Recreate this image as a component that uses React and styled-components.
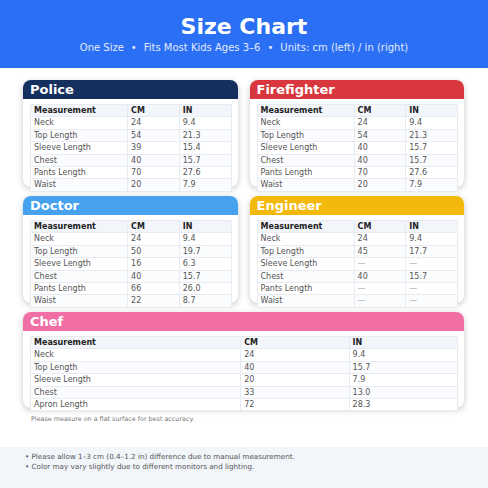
import React from 'react';
import styled, { createGlobalStyle } from 'styled-components';

const Global = createGlobalStyle`
  body {
    margin: 0;
    background: #ffffff;
    font-family: "DejaVu Sans", Verdana, sans-serif;
  }
`;

const Page = styled.div`
  width: 488px;
  height: 488px;
  overflow: hidden;
  display: flex;
  flex-direction: column;
`;

const Header = styled.header`
  height: 68px;
  background: #2b6ff4;
  color: #fff;
  text-align: center;
  padding-top: 14px;
  box-sizing: border-box;
`;

const Title = styled.h1`
  margin: 0;
  font-size: 22px;
  line-height: 26px;
  font-weight: bold;
`;

const Subtitle = styled.div`
  margin-top: 2px;
  font-size: 10px;
  line-height: 12px;
  color: #e2ebff;
`;

const Dot = styled.span`
  margin: 0 7px;
`;

const Main = styled.main`
  display: grid;
  grid-template-columns: 1fr 1fr;
  gap: 9px 12px;
  padding: 12px 24px 39px 23px;
`;

const Card = styled.section`
  position: relative;
  height: ${p => (p.$wide ? 96 : 107)}px;
  grid-column: ${p => (p.$wide ? '1 / span 2' : 'auto')};
  background: #fff;
  border-radius: 8px;
  box-shadow: 0 2px 6px rgba(0, 0, 0, 0.22);
`;

const CardHead = styled.div`
  height: 19px;
  background: ${p => p.$color};
  border-radius: 8px 8px 0 0;
  color: #fff;
  font-size: 13px;
  font-weight: bold;
  line-height: 19px;
  padding-left: 7px;
`;

const Table = styled.table`
  width: calc(100% - 13px);
  margin: 5px 6px 0 7px;
  border-collapse: collapse;
  table-layout: fixed;
  font-size: 8px;
  border: 1px solid #e8ecf2;
`;

const Th = styled.th`
  text-align: left;
  font-weight: bold;
  color: #222;
  background: #f2f5f9;
  padding: 0 3px;
  line-height: 11.4px;
  border: 1px solid #e8ecf2;
  width: ${p => p.$w};
`;

const Td = styled.td`
  color: ${p => (p.$muted ? '#aaa' : '#555')};
  padding: 0 3px;
  line-height: 11.4px;
  border: 1px solid #e8ecf2;
  background: ${p => (p.$alt ? '#fbfcfe' : '#fff')};
`;

const Note = styled.p`
  margin: 4px 0 0 8px;
  font-size: 6.4px;
  line-height: 8px;
  color: #777;
`;

const Footer = styled.footer`
  flex: 1;
  background: #f2f6fb;
  padding: 5px 0 0 25px;
  font-size: 7.2px;
  line-height: 10.4px;
  color: #555;
`;

const cards = [
  {
    name: 'Police',
    color: '#15305e',
    rows: [['Neck', '24', '9.4'], ['Top Length', '54', '21.3'], ['Sleeve Length', '39', '15.4'], ['Chest', '40', '15.7'], ['Pants Length', '70', '27.6'], ['Waist', '20', '7.9']],
  },
  {
    name: 'Firefighter',
    color: '#d8383d',
    rows: [['Neck', '24', '9.4'], ['Top Length', '54', '21.3'], ['Sleeve Length', '40', '15.7'], ['Chest', '40', '15.7'], ['Pants Length', '70', '27.6'], ['Waist', '20', '7.9']],
  },
  {
    name: 'Doctor',
    color: '#46a1ee',
    rows: [['Neck', '24', '9.4'], ['Top Length', '50', '19.7'], ['Sleeve Length', '16', '6.3'], ['Chest', '40', '15.7'], ['Pants Length', '66', '26.0'], ['Waist', '22', '8.7']],
  },
  {
    name: 'Engineer',
    color: '#f3b80c',
    rows: [['Neck', '24', '9.4'], ['Top Length', '45', '17.7'], ['Sleeve Length', '—', '—'], ['Chest', '40', '15.7'], ['Pants Length', '—', '—'], ['Waist', '—', '—']],
  },
  {
    name: 'Chef',
    color: '#f26fa5',
    wide: true,
    rows: [['Neck', '24', '9.4'], ['Top Length', '40', '15.7'], ['Sleeve Length', '20', '7.9'], ['Chest', '33', '13.0'], ['Apron Length', '72', '28.3']],
  },
];

function SizeCard({ card }) {
  return (
    <Card $wide={card.wide}>
      <CardHead $color={card.color}>{card.name}</CardHead>
      <Table>
        <thead>
          <tr>
            <Th $w="50%">Measurement</Th>
            <Th $w="25%">CM</Th>
            <Th $w="25%">IN</Th>
          </tr>
        </thead>
        <tbody>
          {card.rows.map((r, i) => (
            <tr key={r[0]}>
              <Td $alt={i % 2 === 1}>{r[0]}</Td>
              <Td $alt={i % 2 === 1} $muted={r[1] === '—'}>{r[1]}</Td>
              <Td $alt={i % 2 === 1} $muted={r[2] === '—'}>{r[2]}</Td>
            </tr>
          ))}
        </tbody>
      </Table>
      <Note>Please measure on a flat surface for best accuracy.</Note>
    </Card>
  );
}

export default function App() {
  return (
    <Page>
      <Global />
      <Header>
        <Title>Size Chart</Title>
        <Subtitle>
          One Size<Dot>•</Dot>Fits Most Kids Ages 3–6<Dot>•</Dot>Units: cm (left) / in (right)
        </Subtitle>
      </Header>
      <Main>
        {cards.map(c => (
          <SizeCard key={c.name} card={c} />
        ))}
      </Main>
      <Footer>
        <div>• Please allow 1–3 cm (0.4–1.2 in) difference due to manual measurement.</div>
        <div>• Color may vary slightly due to different monitors and lighting.</div>
      </Footer>
    </Page>
  );
}
